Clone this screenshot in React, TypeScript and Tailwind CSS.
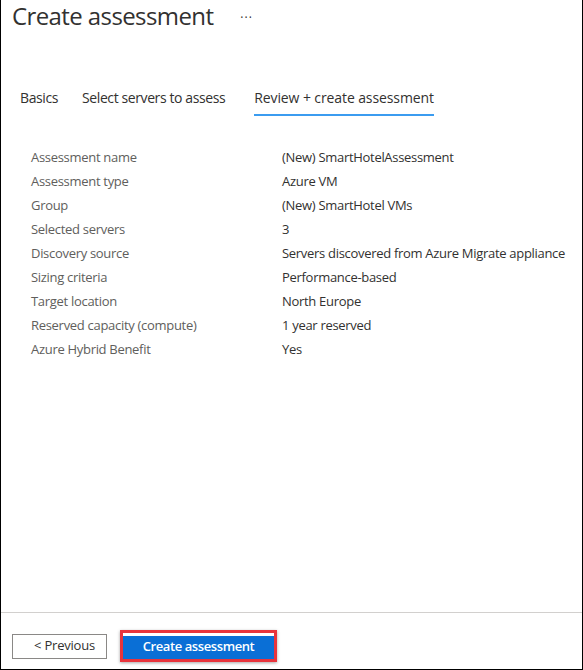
import React from "react";

const rows: [string, string][] = [
  ["Assessment name", "(New) SmartHotelAssessment"],
  ["Assessment type", "Azure VM"],
  ["Group", "(New) SmartHotel VMs"],
  ["Selected servers", "3"],
  ["Discovery source", "Servers discovered from Azure Migrate appliance"],
  ["Sizing criteria", "Performance-based"],
  ["Target location", "North Europe"],
  ["Reserved capacity (compute)", "1 year reserved"],
  ["Azure Hybrid Benefit", "Yes"],
];

export default function App() {
  return (
    <div
      className="w-[583px] h-[670px] bg-white border-l border-r border-b border-black flex flex-col overflow-hidden"
      style={{ fontFamily: '"Open Sans", "Noto Sans", sans-serif' }}
    >
      <div className="flex items-center pl-[11px] h-[34px] -mt-[1px]">
        <h1 className="text-[24px] leading-[30px] text-[#323130] tracking-[-0.6px]">Create assessment</h1>
        <span className="ml-[27px] text-[12px] text-[#323130] tracking-[1px] mt-[4px]">···</span>
      </div>
      <div className="flex items-end gap-[24px] pl-[19px] mt-[54px] text-[14px] text-[#323130] tracking-[-0.4px]">
        <div className="pb-[8px]">Basics</div>
        <div className="pb-[8px]">Select servers to assess</div>
        <div className="pb-[6px] ml-[5px] border-b-2 border-[#3b9cf0] tracking-[-0.1px]">Review + create assessment</div>
      </div>
      <div className="mt-[30px] pl-[30px] flex flex-col text-[13px] tracking-[-0.3px]">
        {rows.map(([k, v]) => (
          <div key={k} className="flex h-[24px] items-center">
            <div className="w-[251px] text-[#605e5c]">{k}</div>
            <div className="text-[#323130]">{v}</div>
          </div>
        ))}
      </div>
      <div className="flex-1" />
      <div className="border-t border-[#d2d0ce] h-[57px] flex items-center gap-[13px] pl-[11px] pt-[10px]">
        <button className="w-[95px] h-[25px] border border-[#8a8886] bg-white text-[13px] text-[#323130] tracking-[-0.2px] pl-[10px]">
          &lt; Previous
        </button>
        <div className="border-[3px] border-[#e8343c] shadow-[0_1px_3px_rgba(0,0,0,0.35)]">
          <button className="w-[151px] h-[23px] bg-[#0a6fd6] text-white text-[13px] font-semibold tracking-[-0.4px]">
            Create assessment
          </button>
        </div>
      </div>
    </div>
  );
}
